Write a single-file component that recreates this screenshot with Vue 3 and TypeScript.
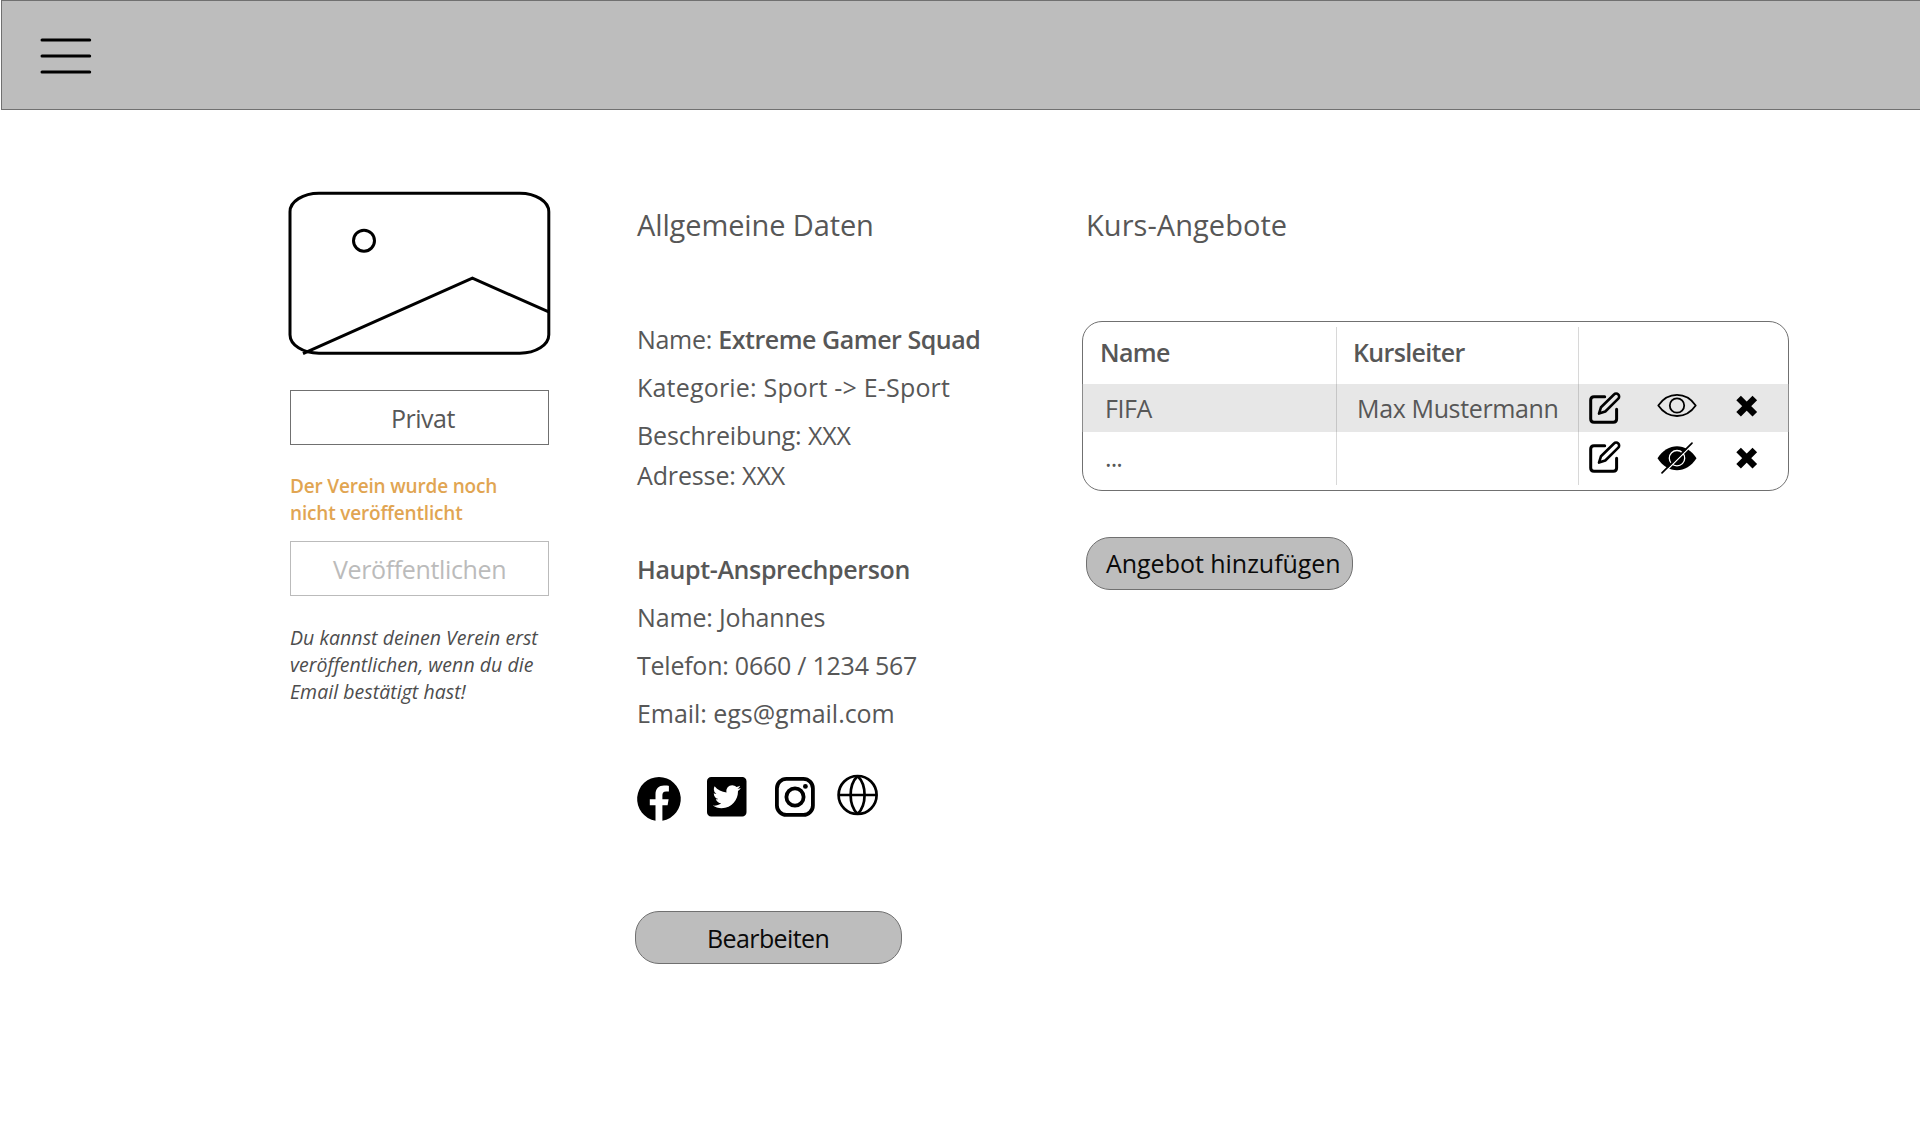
<script setup lang="ts">
interface Line {
  label: string
  strong?: string
  tracking: number
  strongTracking?: number
}

interface Course {
  name: string
  leader: string
  visible: boolean
}

const club: Line[] = [
  { label: 'Name: ', strong: 'Extreme Gamer Squad', tracking: -0.3, strongTracking: -0.46 },
  { label: 'Kategorie: Sport -> E-Sport', tracking: 0.19 },
  { label: 'Beschreibung: XXX', tracking: -0.12 },
  { label: 'Adresse: XXX', tracking: -0.13 },
]

const contact: Line[] = [
  { label: '', strong: 'Haupt-Ansprechperson', tracking: 0, strongTracking: -0.37 },
  { label: 'Name: Johannes', tracking: -0.16 },
  { label: 'Telefon: 0660 / 1234 567', tracking: -0.24 },
  { label: 'Email: egs@gmail.com', tracking: -0.04 },
]

const courses: Course[] = [
  { name: 'FIFA', leader: 'Max Mustermann', visible: true },
  { name: '...', leader: '', visible: false },
]

const spacing = (value?: number) => ({ letterSpacing: `${value ?? 0}px` })
</script>

<template>
  <div class="page">
    <header class="topbar">
      <svg class="menu" width="54" height="38" viewBox="0 0 54 38">
        <path d="M3 3H50.700M3 19H50.700M3 35H50.700" />
      </svg>
    </header>

    <main class="content">
      <section class="side">
        <svg class="picture" width="264" height="166" viewBox="0 0 264 166">
          <rect x="2" y="3.200" width="258.800" height="160" rx="29" ry="18.500" />
          <circle cx="76" cy="50.700" r="10.500" />
          <path d="M15 163.700L184.400 88.200L261.300 122.200" />
        </svg>
        <button class="box private">Privat</button>
        <p class="warning"><span>Der Verein wurde noch</span><br />nicht veröffentlicht</p>
        <button class="box publish" disabled>Veröffentlichen</button>
        <p class="hint">Du kannst deinen Verein erst<br />veröffentlichen, wenn du die<br />Email bestätigt hast!</p>
      </section>

      <section class="data">
        <h2 class="title data-title">Allgemeine Daten</h2>
        <div class="lines club">
          <p v-for="line in club" :key="line.label" :style="spacing(line.tracking)">{{ line.label }}<b v-if="line.strong" :style="spacing(line.strongTracking)">{{ line.strong }}</b></p>
        </div>
        <div class="lines contact">
          <p v-for="line in contact" :key="line.label" :style="spacing(line.tracking)">{{ line.label }}<b v-if="line.strong" :style="spacing(line.strongTracking)">{{ line.strong }}</b></p>
        </div>
        <div class="social">
          <svg class="facebook" width="44" height="44" viewBox="0 0 44 44">
            <path d="M22 0A22 22 0 0 0 18.5 43.7V28.3H12.8V22.2H18.5V17.3C18.5 11.6 21.9 8.6 27 8.6C29.4 8.6 31.9 9 31.9 9V14.4H29.1C26.3 14.4 25.4 16.1 25.4 18V22.2H31.6L30.6 28.3H25.4V43.7A22 22 0 0 0 22 0Z" />
          </svg>
          <svg class="twitter" width="39.500" height="39.500" viewBox="0 0 448 448">
            <path d="M400 0H48C21.500 0 0 21.500 0 48v352c0 26.500 21.500 48 48 48h352c26.500 0 48-21.500 48-48V48c0-26.500-21.500-48-48-48zm-48.900 158.800c.2 2.800.2 5.700.2 8.500 0 86.700-66 186.600-186.600 186.600-37.200 0-71.700-10.800-100.700-29.400 5.300.6 10.400.8 15.800.8 30.700 0 58.900-10.400 81.400-28-28.800-.6-53-19.500-61.300-45.500 10.100 1.500 19.200 1.500 29.600-1.200-30-6.100-52.500-32.500-52.500-64.400v-.8c8.700 4.900 18.900 7.900 29.600 8.300a65.447 65.447 0 0 1-29.200-54.600c0-12.200 3.200-23.400 8.900-33.100 32.300 39.800 80.800 65.800 135.200 68.600-9.300-44.500 24-80.600 64-80.600 18.900 0 35.900 7.900 47.900 20.700 14.800-2.800 29-8.300 41.600-15.800-4.900 15.200-15.200 28-28.800 36.100 13.200-1.400 26-5.100 37.800-10.200-8.900 13.100-20.100 24.700-32.900 34z" />
          </svg>
          <svg class="instagram" width="40" height="40" viewBox="0 0 40 40">
            <rect x="1.900" y="1.900" width="36" height="36" rx="9.500" />
            <circle cx="20" cy="20" r="8.600" />
            <circle class="dot" cx="30.400" cy="9.400" r="2.400" />
          </svg>
          <svg class="globe" width="42" height="42" viewBox="0 0 42 42">
            <circle cx="20.600" cy="21" r="19" />
            <path d="M1.600 21H39.600M20.600 2C11.300 11 11.300 31 20.600 40M20.600 2C29.900 11 29.900 31 20.600 40" />
          </svg>
        </div>
        <button class="pill edit">Bearbeiten</button>
      </section>

      <section class="offers">
        <h2 class="title offers-title">Kurs-Angebote</h2>
        <div class="table">
          <div class="row head">
            <span class="cell-name">Name</span>
            <span class="cell-leader">Kursleiter</span>
          </div>
          <div v-for="course in courses" :key="course.name" class="row" :class="course.visible ? 'active' : 'last'">
            <span class="cell-name">{{ course.name }}</span>
            <span class="cell-leader">{{ course.leader }}</span>
            <span class="actions">
              <svg class="pencil" width="34" height="34" viewBox="0 0 34 34">
                <path d="M16.700 5.700H6Q2.700 5.700 2.700 9V28Q2.700 31.300 6 31.300H25.300Q28.600 31.300 28.600 28V18.300" stroke-width="3" />
                <path d="M11 22.600L13 16.200L26 3.500A2.900 2.900 0 0 1 30.300 7.600L17.300 20.500Z" stroke-width="2.600" />
              </svg>
              <svg v-if="course.visible" class="eye" width="40" height="32" viewBox="0 0 40 32">
                <path d="M1.300 16.500C11 2.400 29 2.400 38.700 16.500C29 30.500 11 30.500 1.300 16.500Z" />
                <circle cx="20" cy="16.500" r="7.200" />
              </svg>
              <svg v-else class="eye hidden" width="40" height="32" viewBox="0 0 40 32">
                <path class="shape" d="M.5 16.200C10.500 .2 29.500 .2 39.500 16.200C29.500 32.200 10.500 32.200 .5 16.200Z" />
                <circle cx="20" cy="16.200" r="7.700" />
                <path class="gap" d="M8 30L35 3" />
                <path class="slash" d="M5 30.800L35 1.200" />
              </svg>
              <svg class="remove" width="24" height="24" viewBox="0 0 24 24">
                <path d="M3.600 4L19.800 20.200M19.800 4L3.600 20.200" />
              </svg>
            </span>
          </div>
          <i class="divider first"></i>
          <i class="divider second"></i>
        </div>
        <button class="pill add">Angebot hinzufügen</button>
      </section>
    </main>
  </div>
</template>

<style>
body {
  background: #fff;
  overflow: hidden;
}
</style>

<style scoped>
.page {
  width: 1920px;
  height: 1126px;
  overflow: hidden;
  font-family: 'Open Sans', 'Noto Sans', sans-serif;
  font-size: 25px;
  color: #575757;
}
.page * {
  box-sizing: border-box;
}
.page p,
.page h2 {
  margin: 0;
  white-space: pre;
}
.page svg {
  display: block;
  flex: none;
  overflow: visible;
}
.topbar {
  margin-left: 1px;
  width: 1925px;
  height: 110px;
  padding: 36px 0 0 37px;
  background: #bdbdbd;
  border: 1px solid #707070;
}
.menu {
  fill: none;
  stroke: #000;
  stroke-width: 3;
  stroke-linecap: round;
}
.content {
  display: flex;
  align-items: flex-start;
  padding-left: 288px;
}
.side {
  width: 349px;
  padding-top: 80px;
}
.picture {
  fill: none;
  stroke: #000;
  stroke-width: 3;
}
button {
  display: block;
  margin: 0;
  padding: 0;
  font: inherit;
  white-space: nowrap;
  text-align: left;
}
.box {
  width: 259px;
  height: 55px;
  margin-left: 2px;
  background: #fff;
  border: 1px solid #707070;
  line-height: 34px;
}
.private {
  margin-top: 34px;
  padding-left: 100px;
  color: #575757;
  letter-spacing: -0.49px;
}
.warning {
  margin: 28px 0 0 2px !important;
  font-size: 19px;
  font-weight: 600;
  line-height: 27px;
  letter-spacing: -0.18px;
  color: #e1a552;
}
.publish {
  margin-top: 14px;
  padding-left: 42px;
  border-color: #bbb;
  color: #bbb;
  letter-spacing: -0.36px;
}
.hint {
  margin: 28px 0 0 2px !important;
  font-size: 19.5px;
  font-style: italic;
  line-height: 27px;
  letter-spacing: 0.04px;
  color: #4d4d4d;
}
.data {
  width: 445px;
  padding-top: 96px;
}
.title {
  font-size: 29px;
  font-weight: 400;
  line-height: 38px;
}
.data-title {
  letter-spacing: -0.12px;
}
.offers-title {
  padding-left: 4px;
  letter-spacing: 0.05px;
}
.lines p {
  line-height: 48px;
}
.lines b {
  font-weight: 600;
}
.club {
  padding-top: 71px;
}
.club p:last-child {
  margin-top: -8px;
}
.contact {
  padding-top: 46px;
}
.social {
  display: flex;
  align-items: flex-start;
  height: 137px;
  margin-top: 37px;
}
.social svg {
  margin-top: 3px;
}
.facebook,
.twitter {
  fill: #000;
}
.social .twitter {
  margin-left: 26px;
}
.instagram,
.globe {
  fill: none;
  stroke: #000;
}
.instagram {
  margin-left: 28px;
  stroke-width: 3.8;
}
.instagram .dot {
  fill: #000;
  stroke: none;
}
.social .globe {
  margin: 0 0 0 22px;
  stroke-width: 2.7;
}
.pill {
  width: 267px;
  height: 53px;
  background: #bdbdbd;
  border: 1px solid #707070;
  border-radius: 24px;
  color: #0a0a0a;
  line-height: 34px;
}
.edit {
  margin-left: -2px;
  padding-left: 71px;
  padding-top: 1px;
  letter-spacing: -0.6px;
}
.offers {
  width: 720px;
  padding-top: 96px;
}
.table {
  position: relative;
  width: 707px;
  height: 170px;
  margin-top: 77px;
  border: 1px solid #707070;
  border-radius: 20px;
}
.row {
  display: flex;
  height: 48px;
  margin: 0 -1px;
  line-height: 34px;
}
.head {
  height: 62px;
  padding-top: 13px;
  font-weight: 600;
  letter-spacing: -0.65px;
}
.cell-name {
  width: 254px;
  padding-left: 23px;
}
.cell-leader {
  width: 242px;
  padding-left: 21px;
  letter-spacing: -0.36px;
}
.head .cell-name {
  padding-left: 18px;
}
.head .cell-leader {
  padding-left: 17px;
  letter-spacing: -0.66px;
}
.active {
  background: rgba(189, 189, 189, 0.36);
}
.active .cell-name,
.active .cell-leader {
  padding-top: 7px;
}
.active .cell-name {
  letter-spacing: -0.43px;
}
.last .cell-name {
  padding-top: 8px;
  letter-spacing: -0.9px;
}
.actions {
  display: flex;
  align-items: flex-start;
  padding-left: 10px;
}
.pencil {
  margin-top: 7px;
  fill: none;
  stroke: #000;
  stroke-linecap: round;
  stroke-linejoin: round;
}
.eye {
  margin: 5px 0 0 35px;
  fill: none;
  stroke: #000;
  stroke-width: 1.8;
  stroke-linejoin: round;
}
.last .pencil {
  margin-top: 8px;
}
.last .eye {
  margin-top: 10px;
}
.hidden .shape {
  fill: #000;
  stroke: none;
}
.hidden circle {
  stroke: #fff;
  stroke-width: 1.3;
}
.hidden .gap {
  stroke: #fff;
  stroke-width: 1.5;
}
.hidden .slash {
  stroke: #000;
  stroke-width: 1.7;
  stroke-linecap: round;
}
.remove {
  margin: 10px 0 0 38px;
  stroke: #000;
  stroke-width: 6.5;
}
.last .remove {
  margin-top: 14px;
}
.divider {
  position: absolute;
  top: 5px;
  width: 1px;
  height: 158px;
  background: rgba(112, 112, 112, 0.27);
}
.first {
  left: 253px;
}
.second {
  left: 495px;
}
.add {
  margin: 46px 0 0 4px;
  padding-left: 19px;
  padding-bottom: 1px;
  letter-spacing: -0.03px;
}
</style>
